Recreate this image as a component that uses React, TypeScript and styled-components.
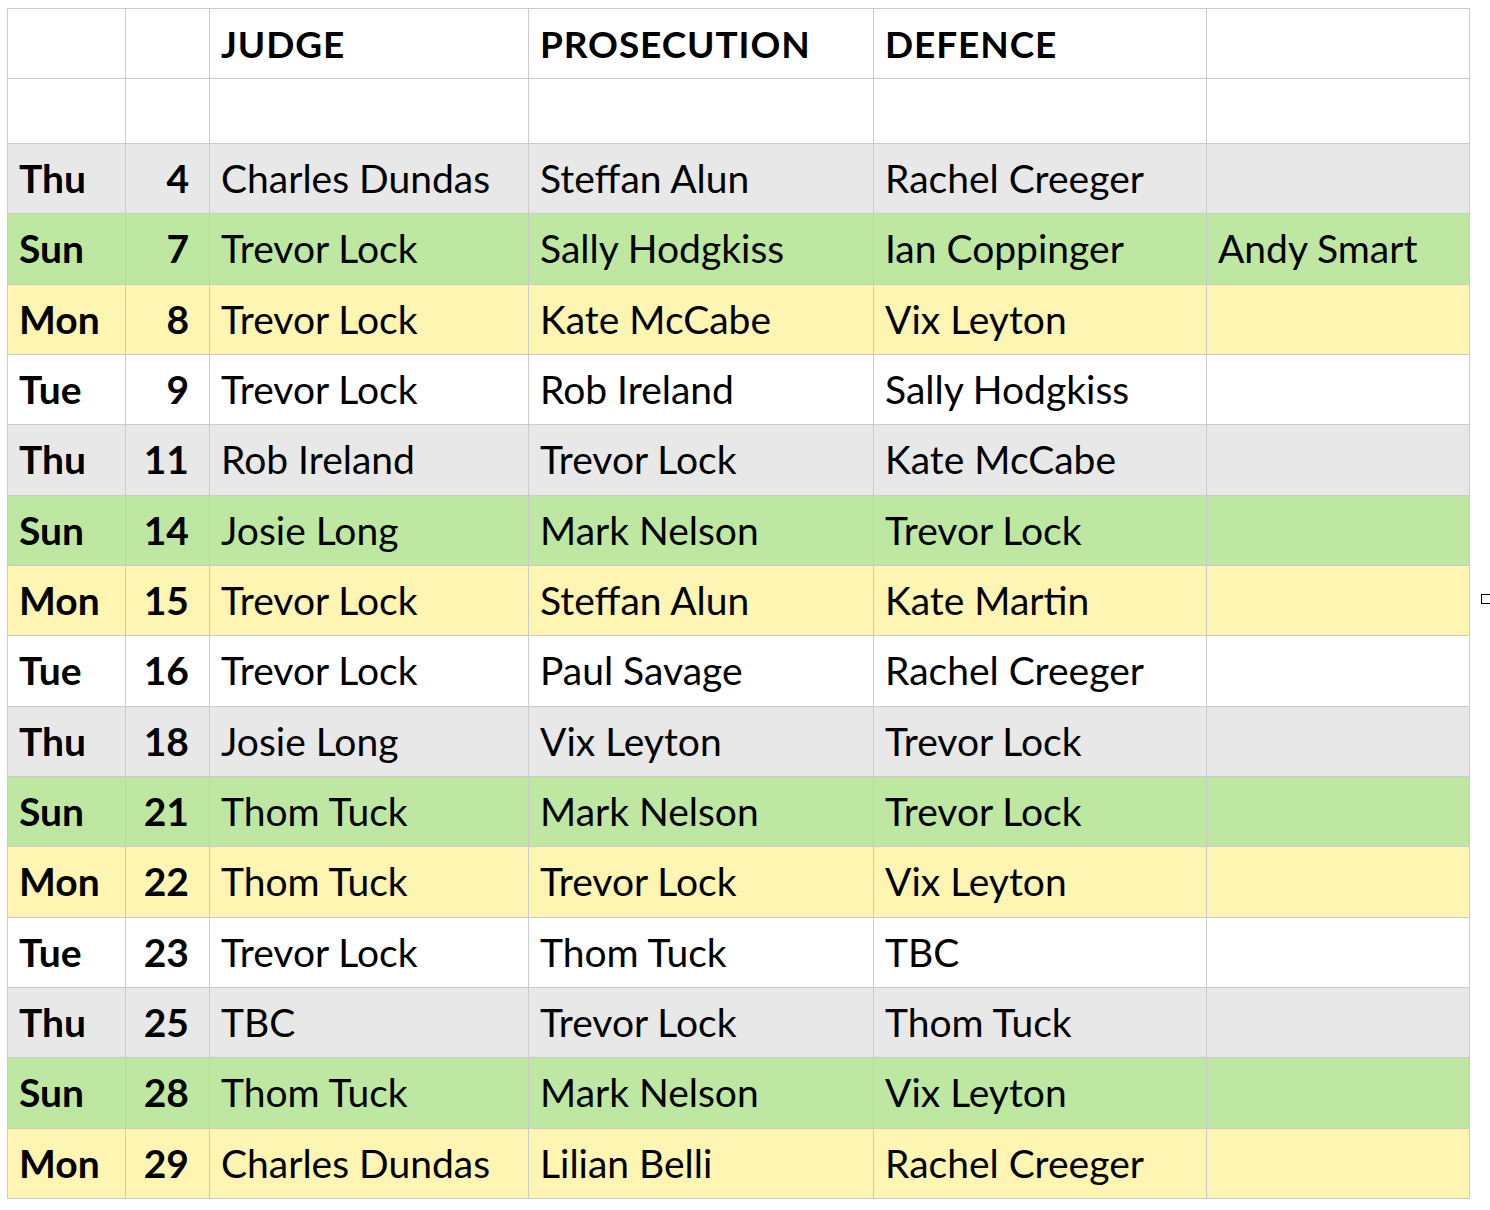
import React from "react";
import styled, { createGlobalStyle } from "styled-components";

const Global = createGlobalStyle`
  html, body { margin: 0; padding: 0; background: #ffffff; }
  body { font-family: Lato, "Open Sans", sans-serif; color: #000; overflow: hidden; }
`;

type Tone = "gray" | "green" | "yellow" | "white";

const toneColor: Record<Tone, string> = {
  gray: "#e8e8e8",
  green: "#bee7a2",
  yellow: "#fdf5b1",
  white: "#ffffff",
};

const Page = styled.div`
  position: relative;
  width: 1490px;
  height: 1210px;
  padding: 8px 0 0 7px;
  box-sizing: border-box;
`;

const Sheet = styled.table`
  border-collapse: collapse;
  table-layout: fixed;
  width: 1462px;
  font-family: Lato, "Open Sans", sans-serif;
`;

const Row = styled.tr<{ $tone: Tone; $h: number }>`
  background: ${(p) => toneColor[p.$tone]};
  height: ${(p) => p.$h}px;
`;

const Cell = styled.td<{ $kind?: "day" | "num" | "name" | "head" }>`
  border: 1px solid #cacaca;
  padding: 0 11px;
  vertical-align: middle;
  white-space: nowrap;
  overflow: hidden;
  font-size: ${(p) => (p.$kind === "head" ? "37px" : "39px")};
  font-weight: ${(p) => (p.$kind === "day" || p.$kind === "num" || p.$kind === "head" ? 700 : 400)};
  text-align: ${(p) => (p.$kind === "num" ? "right" : "left")};
  padding-right: ${(p) => (p.$kind === "num" ? "20px" : "11px")};
  letter-spacing: ${(p) => (p.$kind === "head" ? "0.9px" : "0")};
  line-height: 1;
`;

const Handle = styled.div`
  position: absolute;
  left: 1481px;
  top: 594px;
  width: 11px;
  height: 10px;
  border: 1.5px solid #000;
  box-sizing: border-box;
  background: #fff;
`;

const rows: [string, number, string, string, string, string, Tone][] = [
  ["Thu", 4, "Charles Dundas", "Steffan Alun", "Rachel Creeger", "", "gray"],
  ["Sun", 7, "Trevor Lock", "Sally Hodgkiss", "Ian Coppinger", "Andy Smart", "green"],
  ["Mon", 8, "Trevor Lock", "Kate McCabe", "Vix Leyton", "", "yellow"],
  ["Tue", 9, "Trevor Lock", "Rob Ireland", "Sally Hodgkiss", "", "white"],
  ["Thu", 11, "Rob Ireland", "Trevor Lock", "Kate McCabe", "", "gray"],
  ["Sun", 14, "Josie Long", "Mark Nelson", "Trevor Lock", "", "green"],
  ["Mon", 15, "Trevor Lock", "Steffan Alun", "Kate Martin", "", "yellow"],
  ["Tue", 16, "Trevor Lock", "Paul Savage", "Rachel Creeger", "", "white"],
  ["Thu", 18, "Josie Long", "Vix Leyton", "Trevor Lock", "", "gray"],
  ["Sun", 21, "Thom Tuck", "Mark Nelson", "Trevor Lock", "", "green"],
  ["Mon", 22, "Thom Tuck", "Trevor Lock", "Vix Leyton", "", "yellow"],
  ["Tue", 23, "Trevor Lock", "Thom Tuck", "TBC", "", "white"],
  ["Thu", 25, "TBC", "Trevor Lock", "Thom Tuck", "", "gray"],
  ["Sun", 28, "Thom Tuck", "Mark Nelson", "Vix Leyton", "", "green"],
  ["Mon", 29, "Charles Dundas", "Lilian Belli", "Rachel Creeger", "", "yellow"],
];

export default function App() {
  return (
    <Page>
      <Global />
      <Sheet>
        <colgroup>
          <col style={{ width: 118 }} />
          <col style={{ width: 84 }} />
          <col style={{ width: 319 }} />
          <col style={{ width: 345 }} />
          <col style={{ width: 333 }} />
          <col style={{ width: 263 }} />
        </colgroup>
        <tbody>
          <Row $tone="white" $h={70}>
            <Cell />
            <Cell />
            <Cell $kind="head">JUDGE</Cell>
            <Cell $kind="head">PROSECUTION</Cell>
            <Cell $kind="head">DEFENCE</Cell>
            <Cell />
          </Row>
          <Row $tone="white" $h={65}>
            <Cell />
            <Cell />
            <Cell />
            <Cell />
            <Cell />
            <Cell />
          </Row>
          {rows.map(([day, n, judge, pros, def, extra, tone], i) => (
            <Row key={i} $tone={tone} $h={70.33}>
              <Cell $kind="day">{day}</Cell>
              <Cell $kind="num">{n}</Cell>
              <Cell $kind="name">{judge}</Cell>
              <Cell $kind="name">{pros}</Cell>
              <Cell $kind="name">{def}</Cell>
              <Cell $kind="name">{extra}</Cell>
            </Row>
          ))}
        </tbody>
      </Sheet>
      <Handle />
    </Page>
  );
}
